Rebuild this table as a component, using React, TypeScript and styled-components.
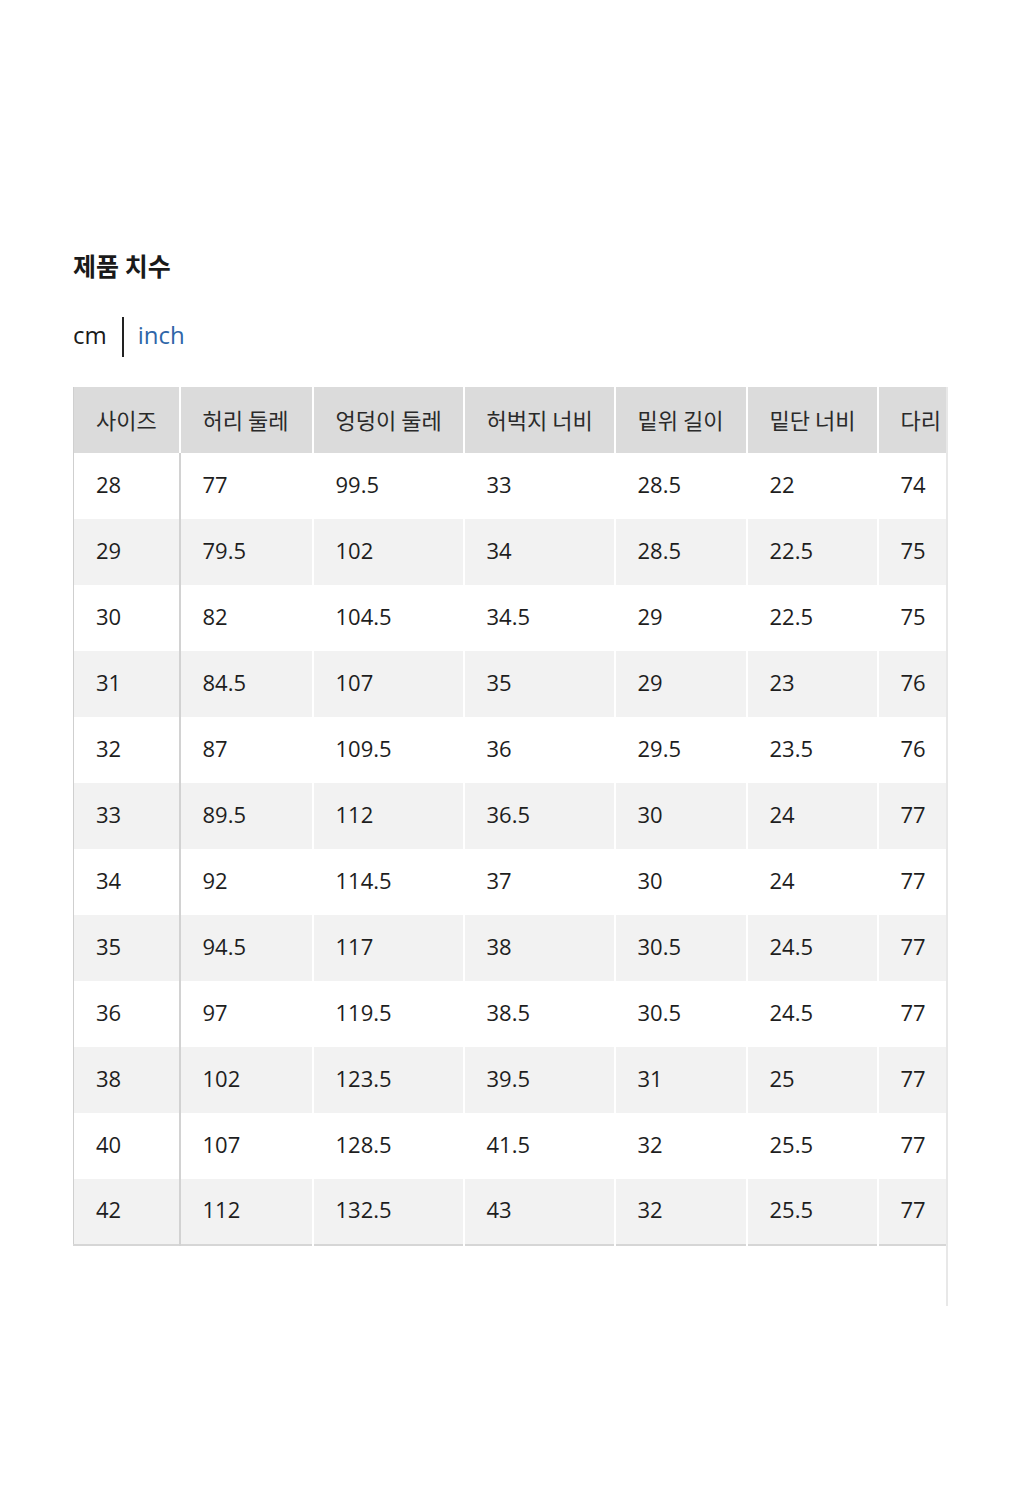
import React from 'react';
import styled, { createGlobalStyle } from 'styled-components';

const GlobalStyle = createGlobalStyle`
  body {
    margin: 0;
    background: #fff;
    font-family: 'Open Sans', 'Noto Sans CJK KR', sans-serif;
    color: #222;
  }
`;

const Page = styled.div`
  padding: 251px 0 0 73px;
  min-height: 1500px;
  box-sizing: border-box;
`;

const Title = styled.h2`
  margin: 0;
  font-family: 'Noto Sans CJK KR', sans-serif;
  font-size: 25px;
  line-height: 28px;
  font-weight: 700;
  color: #1a1a1a;
`;

const UnitSwitch = styled.div`
  display: flex;
  align-items: center;
  margin-top: 38px;
  height: 40px;
`;

const Unit = styled.span<{ $active?: boolean }>`
  font-size: 24px;
  line-height: 34px;
  margin-bottom: 5px;
  color: ${p => (p.$active ? '#1a1a1a' : '#2f66a8')};
`;

const Divider = styled.span`
  width: 2px;
  height: 40px;
  background: #222;
  margin: 0 14px 0 15px;
`;

const Scroller = styled.div`
  margin-top: 30px;
  width: 873px;
  overflow: hidden;
  border-right: 2px solid #e8e8e8;
  padding-bottom: 60px;
`;

const Table = styled.table`
  border-collapse: collapse;
  table-layout: fixed;
  width: 954px;
  border-left: 1px solid #cfcfcf;
  border-bottom: 2px solid #d6d6d6;
`;

const Col = styled.col<{ $w: number }>`
  width: ${p => p.$w}px;
`;

const Row = styled.tr<{ $shade?: 'head' | 'gray' | 'white' }>`
  height: 66px;
  background: ${p =>
    p.$shade === 'head' ? '#dbdbdb' : p.$shade === 'gray' ? '#f2f2f2' : '#fff'};
`;

const Cell = styled.td<{ $first?: boolean }>`
  padding: 0 0 5px 22px;
  font-size: 22px;
  font-weight: 400;
  text-align: left;
  color: #1e1e1e;
  white-space: nowrap;
  overflow: hidden;
  border-right: 2px solid ${p => (p.$first ? '#d2d2d2' : '#fff')};
`;

const HeadCell = styled(Cell).attrs({ as: 'th' })`
  padding-bottom: 3px;
  font-family: 'Noto Sans CJK KR', sans-serif;
  font-size: 22px;
  font-weight: 400;
  color: #2a2a2a;
`;

const widths = [106, 133, 151, 151, 132, 131, 150];
const headers = ['사이즈', '허리 둘레', '엉덩이 둘레', '허벅지 너비', '밑위 길이', '밑단 너비', '다리'];
const rows = [
  ['28', '77', '99.5', '33', '28.5', '22', '74'],
  ['29', '79.5', '102', '34', '28.5', '22.5', '75'],
  ['30', '82', '104.5', '34.5', '29', '22.5', '75'],
  ['31', '84.5', '107', '35', '29', '23', '76'],
  ['32', '87', '109.5', '36', '29.5', '23.5', '76'],
  ['33', '89.5', '112', '36.5', '30', '24', '77'],
  ['34', '92', '114.5', '37', '30', '24', '77'],
  ['35', '94.5', '117', '38', '30.5', '24.5', '77'],
  ['36', '97', '119.5', '38.5', '30.5', '24.5', '77'],
  ['38', '102', '123.5', '39.5', '31', '25', '77'],
  ['40', '107', '128.5', '41.5', '32', '25.5', '77'],
  ['42', '112', '132.5', '43', '32', '25.5', '77'],
];

export default function App() {
  return (
    <Page>
      <GlobalStyle />
      <Title>제품 치수</Title>
      <UnitSwitch>
        <Unit $active>cm</Unit>
        <Divider />
        <Unit>inch</Unit>
      </UnitSwitch>
      <Scroller>
        <Table>
          <colgroup>
            {widths.map((w, i) => (
              <Col key={i} $w={w} />
            ))}
          </colgroup>
          <thead>
            <Row $shade="head">
              {headers.map(h => (
                <HeadCell key={h}>{h}</HeadCell>
              ))}
            </Row>
          </thead>
          <tbody>
            {rows.map((r, ri) => (
              <Row key={r[0]} $shade={ri % 2 === 0 ? 'white' : 'gray'}>
                {r.map((v, ci) => (
                  <Cell key={ci} $first={ci === 0}>
                    {v}
                  </Cell>
                ))}
              </Row>
            ))}
          </tbody>
        </Table>
      </Scroller>
    </Page>
  );
}
